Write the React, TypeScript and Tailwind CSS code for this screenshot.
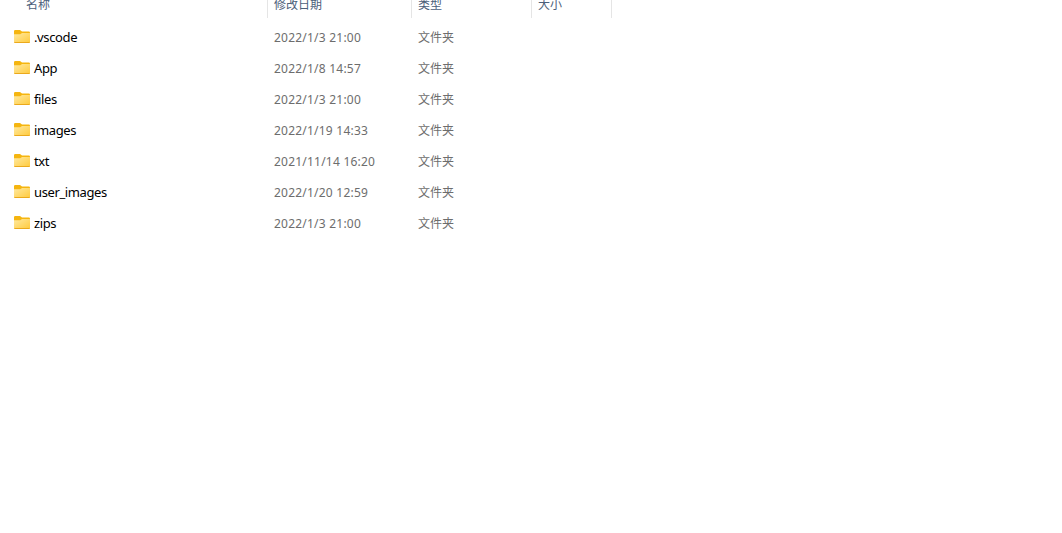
interface FolderItem {
  name: string
  modified: string
}

const folders: FolderItem[] = [
  { name: '.vscode', modified: '2022/1/3 21:00' },
  { name: 'App', modified: '2022/1/8 14:57' },
  { name: 'files', modified: '2022/1/3 21:00' },
  { name: 'images', modified: '2022/1/19 14:33' },
  { name: 'txt', modified: '2021/11/14 16:20' },
  { name: 'user_images', modified: '2022/1/20 12:59' },
  { name: 'zips', modified: '2022/1/3 21:00' },
]

function FolderIcon() {
  return (
    <svg width="16" height="13" viewBox="0 0 16 13" className="mb-0.5 shrink-0">
      <defs>
        <linearGradient id="folder-front" x1="0" y1="0" x2="1" y2="1">
          <stop offset="0" stopColor="#ffe9a0" />
          <stop offset="1" stopColor="#ffca3c" />
        </linearGradient>
      </defs>
      <path d="M0 1.2Q0 0 1.2 0H6L8 1.6H14.8Q16 1.6 16 2.8V8H0Z" fill="#f5b50f" />
      <path d="M0 4.3H6.2L8 3H16V11.8Q16 13 14.8 13H1.2Q0 13 0 11.8Z" fill="url(#folder-front)" />
      <path d="M0 11.5Q0 12.1 1.2 12.1H14.8Q16 12.1 16 11.5Q16 13 14.8 13H1.2Q0 13 0 11.5Z" fill="#eba91c" />
    </svg>
  )
}

export default function App() {
  return (
    <div className="h-[533px] w-full overflow-hidden bg-white font-['Noto_Sans','Noto_Sans_CJK_SC',sans-serif] text-xs">
      {/* Column headers */}
      <div className="flex h-[18px] text-[#4c607a]">
        <div className="w-[268px] border-r border-[#e5e5e5] pl-[26px] leading-[9px]">名称</div>
        <div className="w-36 border-r border-[#e5e5e5] pl-1.5 leading-[9px]">修改日期</div>
        <div className="w-[120px] border-r border-[#e5e5e5] pl-1.5 leading-[9px]">类型</div>
        <div className="w-20 border-r border-[#e5e5e5] pl-1.5 leading-[9px]">大小</div>
      </div>

      {/* Folder rows */}
      <div className="pt-1">
        {folders.map(folder => (
          <div key={folder.name} className="flex h-[31px] items-center text-[#6d6d6d]">
            <div className="flex w-[274px] items-center gap-1 pl-3.5 text-[13px] tracking-[-0.38px] text-black">
              <FolderIcon />
              <span>{folder.name}</span>
            </div>
            <span className="w-36 tracking-[0.22px]">{folder.modified}</span>
            <span>文件夹</span>
          </div>
        ))}
      </div>
    </div>
  )
}
